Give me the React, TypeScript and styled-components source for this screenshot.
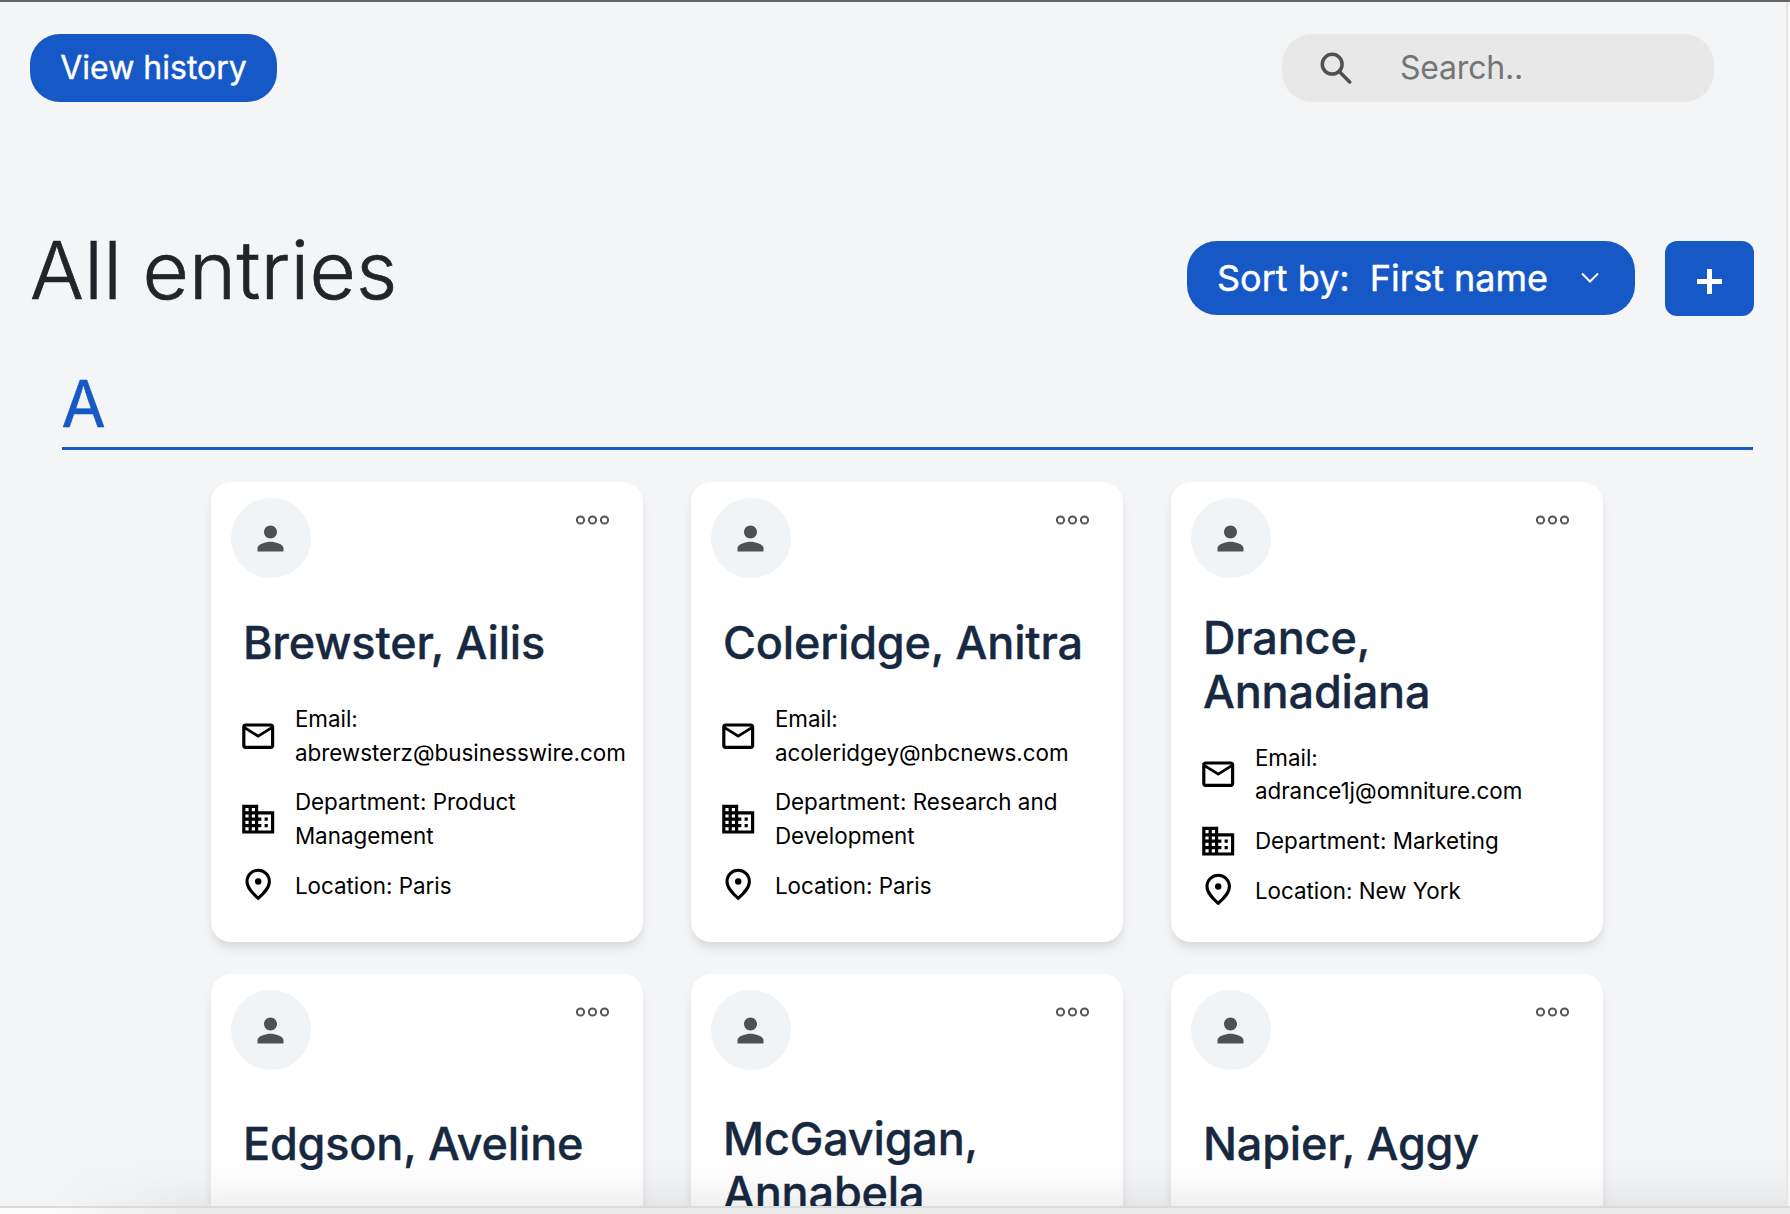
import React from "react";
import styled, { createGlobalStyle } from "styled-components";

const GlobalStyle = createGlobalStyle`
  * { box-sizing: border-box; }
  body {
    margin: 0;
    background: #f3f5f7;
    font-family: Inter, "Liberation Sans", sans-serif;
    overflow: hidden;
  }
  button, input { font: inherit; }
`;

const Page = styled.div`
  position: relative;
  width: 1790px;
  height: 1214px;
  overflow: hidden;
  border-top: 2px solid #666567;
  background: #f3f5f7;
`;

const TopBar = styled.header`
  display: flex;
  justify-content: space-between;
  padding: 32px 76px 0 30px;
`;

const HistoryButton = styled.button`
  width: 247px;
  height: 68px;
  border: 0;
  border-radius: 30px;
  padding: 0;
  background: #1758c7;
  color: #fff;
  font-size: 32px;
  -webkit-text-stroke: 0.4px #fff;
  line-height: 48px;
`;

const SearchBox = styled.label`
  display: flex;
  align-items: center;
  width: 432px;
  height: 68px;
  padding-left: 37.5px;
  border-radius: 30px;
  background: #e8e8e8;
`;

const SearchInput = styled.input`
  width: 260px;
  margin-left: 48.5px;
  padding: 0;
  border: 0;
  outline: 0;
  background: transparent;
  font-size: 32px;
  letter-spacing: -0.2px;
  line-height: 48px;
  &::placeholder { color: #757575; opacity: 1; }
`;

const Heading = styled.div`
  display: flex;
  justify-content: space-between;
  align-items: flex-start;
  padding: 139px 36px 0 30px;
  height: 273px;
`;

const Title = styled.h1`
  margin: -19px 0 0;
  color: #212529;
  font-size: 80px;
  font-weight: 300;
  letter-spacing: 0.3px;
  word-spacing: -2.5px;
  line-height: 96px;
  -webkit-text-stroke: 0.7px #212529;
`;

const Actions = styled.div`
  display: flex;
  gap: 30px;
`;

const SortButton = styled.button`
  display: flex;
  align-items: center;
  width: 448px;
  height: 74px;
  padding: 0 0 0 30px;
  border: 0;
  border-radius: 30px;
  background: #1758c7;
  color: #fff;
  font-size: 36px;
  -webkit-text-stroke: 0.4px #fff;
`;

const SortValue = styled.span`
  margin-left: 20px;
  margin-right: 33px;
`;

const AddButton = styled.button`
  display: flex;
  justify-content: center;
  align-items: center;
  width: 89px;
  height: 75px;
  padding: 6px 0 0;
  border: 0;
  border-radius: 12px;
  background: #1758c7;
`;

const Letter = styled.h2`
  height: 75px;
  margin: 0 37.5px 32px 61.5px;
  border-bottom: 3px solid #1758c7;
  color: #1758c7;
  font-size: 64px;
  font-weight: 400;
  line-height: 57px;
  -webkit-text-stroke: 0.5px #1758c7;
`;

const Grid = styled.main`
  display: grid;
  grid-template-columns: repeat(3, 432px);
  grid-auto-rows: 460px;
  gap: 32px 48px;
  padding-left: 210.5px;
`;

const Card = styled.article`
  border-radius: 20px;
  background: #fff;
  box-shadow: 0 8px 12px -2px rgba(0, 0, 0, 0.1), 0 4px 8px -2px rgba(0, 0, 0, 0.04);
  padding: 16px 0 0 20px;
`;

const CardTop = styled.div`
  display: flex;
  justify-content: space-between;
  padding-right: 33px;
`;

const Avatar = styled.div`
  display: flex;
  align-items: center;
  justify-content: center;
  width: 80px;
  height: 80px;
  border-radius: 50%;
  background: #f0f4f7;
`;

const DotsIcon = styled.svg`
  margin-top: 17px;
`;

const Name = styled.h3<{ $top: number; $bottom: number }>`
  width: 380px;
  margin: ${(p) => p.$top}px 0 ${(p) => p.$bottom}px 12.5px;
  color: #172841;
  font-size: 45px;
  font-weight: 500;
  letter-spacing: -0.18px;
  line-height: 54px;
  -webkit-text-stroke: 0.35px #172841;
`;

const Details = styled.ul`
  display: flex;
  flex-direction: column;
  gap: 16px;
  margin: 0;
  padding: 0 0 0 8.6px;
  list-style: none;
`;

const Detail = styled.li`
  display: flex;
  align-items: center;
  color: #000;
  font-size: 22.4px;
  line-height: 33.6px;
`;

const DetailIcon = styled.svg`
  flex: none;
  width: 38.4px;
  height: 38.4px;
  margin: -3px 17.4px -3px 0;
  fill: #000;
`;

const DetailText = styled.span`
  max-width: 330px;
`;

const BottomShade = styled.div`
  position: absolute;
  left: 0;
  right: 0;
  bottom: 8px;
  height: 48px;
  background: linear-gradient(rgba(0, 0, 0, 0), rgba(0, 0, 0, 0.02) 50%, rgba(0, 0, 0, 0.06));
  mask-image: linear-gradient(90deg, transparent 50px, #000 230px);
`;

const BottomEdge = styled.div`
  position: absolute;
  left: 0;
  right: 0;
  bottom: 0;
  height: 8px;
  border-top: 2px solid #dadada;
  background: linear-gradient(90deg, #fbfbfb 50px, #ebebeb 190px);
`;

const RightEdge = styled.div`
  position: absolute;
  top: 0;
  right: 0;
  bottom: 8px;
  width: 4px;
  border-left: 2px solid #e6e7e8;
  background: #f5f5f5;
`;

const MAIL = "M22 6c0-1.100-.9-2-2-2H4c-1.100 0-2 .9-2 2v12c0 1.100.9 2 2 2h16c1.100 0 2-.9 2-2V6zm-2 0-8 5-8-5h16zm0 12H4V8l8 5 8-5v10z";
const BUILDING = "M12 7V3H2v18h20V7H12zM6 19H4v-2h2v2zm0-4H4v-2h2v2zm0-4H4V9h2v2zm0-4H4V5h2v2zm4 12H8v-2h2v2zm0-4H8v-2h2v2zm0-4H8V9h2v2zm0-4H8V5h2v2zm10 12h-8v-2h2v-2h-2v-2h2v-2h-2V9h8v10zm-2-8h-2v2h2v-2zm0 4h-2v2h2v-2z";

type Person = {
  name: string;
  nameTop: number;
  nameBottom: number;
  email?: string;
  department?: string;
  location?: string;
};

const people: Person[] = [
  { name: "Brewster, Ailis", nameTop: 38, nameBottom: 32.2, email: "abrewsterz@businesswire.com", department: "Product Management", location: "Paris" },
  { name: "Coleridge, Anitra", nameTop: 38, nameBottom: 32.2, email: "acoleridgey@nbcnews.com", department: "Research and Development", location: "Paris" },
  { name: "Drance, Annadiana", nameTop: 33, nameBottom: 21.8, email: "adrance1j@omniture.com", department: "Marketing", location: "New York" },
  { name: "Edgson, Aveline", nameTop: 47, nameBottom: 32 },
  { name: "McGavigan, Annabela", nameTop: 42, nameBottom: 22 },
  { name: "Napier, Aggy", nameTop: 47, nameBottom: 32 },
];

function PersonCard({ person }: { person: Person }) {
  return (
    <Card>
      <CardTop>
        <Avatar>
          <svg width="39" height="39" viewBox="0 0 24 24" fill="#505050">
            <path d="M12 12c2.210 0 4-1.790 4-4s-1.790-4-4-4-4 1.790-4 4 1.790 4 4 4zm0 2c-2.670 0-8 1.340-8 4v2h16v-2c0-2.660-5.330-4-8-4z" />
          </svg>
        </Avatar>
        <DotsIcon width="34" height="10" viewBox="0 0 34 10" fill="none" stroke="#555" strokeWidth="2">
          <circle cx="4.500" cy="5" r="3.600" />
          <circle cx="16.500" cy="5" r="3.600" />
          <circle cx="28.500" cy="5" r="3.600" />
        </DotsIcon>
      </CardTop>
      <Name $top={person.nameTop} $bottom={person.nameBottom}>{person.name}</Name>
      {person.email && (
        <Details>
          <Detail>
            <DetailIcon viewBox="0 0 24 24"><path d={MAIL} /></DetailIcon>
            <DetailText>Email: {person.email}</DetailText>
          </Detail>
          <Detail>
            <DetailIcon viewBox="0 0 24 24"><path d={BUILDING} /></DetailIcon>
            <DetailText>Department: {person.department}</DetailText>
          </Detail>
          <Detail>
            <DetailIcon viewBox="0 0 24 24">
              <path d="M12 2.700C8.400 2.700 5 5.400 5 9.700c0 4 3.400 7.300 7 10.500 3.600-3.200 7-6.500 7-10.500C19 5.400 15.600 2.700 12 2.700z" fill="none" stroke="#000" strokeWidth="1.900" />
              <circle cx="12" cy="9.700" r="2" />
            </DetailIcon>
            <DetailText>Location: {person.location}</DetailText>
          </Detail>
        </Details>
      )}
    </Card>
  );
}

export default function App() {
  return (
    <Page>
      <GlobalStyle />
      <TopBar>
        <HistoryButton>View history</HistoryButton>
        <SearchBox>
          <svg width="32" height="32" viewBox="0 0 32 32" fill="none" stroke="#505050" strokeWidth="3.500">
            <circle cx="12.200" cy="12.200" r="9.900" />
            <path d="M19 19.200 29.700 29.900" strokeLinecap="round" />
          </svg>
          <SearchInput placeholder="Search.." />
        </SearchBox>
      </TopBar>
      <Heading>
        <Title>All entries</Title>
        <Actions>
          <SortButton>
            <span>Sort by:</span>
            <SortValue>First name</SortValue>
            <svg width="18" height="12" viewBox="0 0 18 12" fill="none" stroke="#fff" strokeWidth="2">
              <path d="M1 1.500 9 9.500l8-8" />
            </svg>
          </SortButton>
          <AddButton aria-label="Add entry">
            <svg width="25" height="25" viewBox="0 0 25 25" fill="none" stroke="#fff" strokeWidth="5">
              <path d="M12.500 0v25M0 12.500h25" />
            </svg>
          </AddButton>
        </Actions>
      </Heading>
      <Letter>A</Letter>
      <Grid>
        {people.map((p) => (
          <PersonCard key={p.name} person={p} />
        ))}
      </Grid>
      <BottomShade />
      <RightEdge />
      <BottomEdge />
    </Page>
  );
}
